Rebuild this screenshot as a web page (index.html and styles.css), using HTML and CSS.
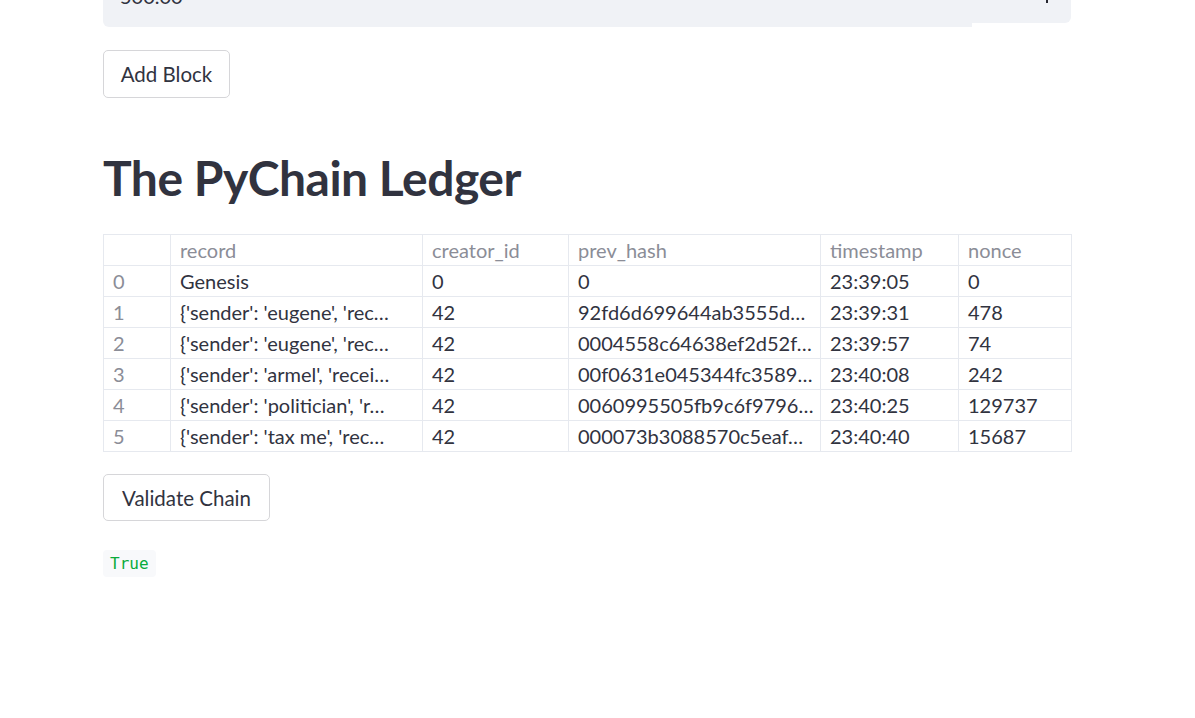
FILE: index.html
```html
<!DOCTYPE html>
<html>
<head>
<meta charset="utf-8">
<link rel="stylesheet" href="styles.css">
</head>
<body>
<main class="page">
  <div class="num-input">
    <div class="num-field"><span class="num-value">500.00</span></div>
    <div class="num-steps">
      <span class="step-plus"></span>
    </div>
  </div>

  <button class="btn btn-add">Add Block</button>

  <h1 class="title">The PyChain Ledger</h1>

  <table class="ledger">
    <colgroup>
      <col class="c-idx">
      <col class="c-rec">
      <col class="c-cre">
      <col class="c-hash">
      <col class="c-ts">
      <col class="c-nonce">
    </colgroup>
    <thead>
      <tr>
        <th></th>
        <th>record</th>
        <th>creator_id</th>
        <th>prev_hash</th>
        <th>timestamp</th>
        <th>nonce</th>
      </tr>
    </thead>
    <tbody>
      <tr><td class="idx">0</td><td>Genesis</td><td>0</td><td>0</td><td>23:39:05</td><td>0</td></tr>
      <tr><td class="idx">1</td><td>{'sender': 'eugene', 'rec…</td><td>42</td><td>92fd6d699644ab3555d…</td><td>23:39:31</td><td>478</td></tr>
      <tr><td class="idx">2</td><td>{'sender': 'eugene', 'rec…</td><td>42</td><td>0004558c64638ef2d52f…</td><td>23:39:57</td><td>74</td></tr>
      <tr><td class="idx">3</td><td>{'sender': 'armel', 'recei…</td><td>42</td><td>00f0631e045344fc3589…</td><td>23:40:08</td><td>242</td></tr>
      <tr><td class="idx">4</td><td>{'sender': 'politician', 'r…</td><td>42</td><td>0060995505fb9c6f9796…</td><td>23:40:25</td><td>129737</td></tr>
      <tr><td class="idx">5</td><td>{'sender': 'tax me', 'rec…</td><td>42</td><td>000073b3088570c5eaf…</td><td>23:40:40</td><td>15687</td></tr>
    </tbody>
  </table>

  <button class="btn btn-validate">Validate Chain</button>

  <div class="result"><code class="result-code">True</code></div>
</main>
</body>
</html>
```

FILE: styles.css
```css
html, body {
  margin: 0;
  padding: 0;
  background: #ffffff;
}

body {
  font-family: "Lato", "Noto Sans", sans-serif;
  color: #31333f;
  overflow: hidden;
  height: 718px;
}

.page {
  width: 968px;
  margin-left: 103px;
  display: flex;
  flex-direction: column;
  align-items: flex-start;
}

.num-input {
  width: 968px;
  display: flex;
  align-items: flex-start;
  margin-top: -21px;
}

.num-field {
  flex: 1;
  height: 48px;
  background: #f0f2f6;
  border-bottom-left-radius: 6px;
  padding: 5px 0 0 17px;
  box-sizing: border-box;
}

.num-value {
  display: block;
  font-size: 20px;
  line-height: 24px;
  color: #31333f;
}

.num-steps {
  width: 99px;
  height: 44px;
  background: #f0f2f6;
  border-bottom-right-radius: 6px;
  position: relative;
}

.step-plus {
  position: absolute;
  left: 74px;
  top: 11px;
  width: 2px;
  height: 13px;
  background: #262730;
}

.btn {
  font-family: inherit;
  font-size: 20.5px;
  color: #31333f;
  background: #ffffff;
  border: 1px solid #d6d6d9;
  border-radius: 5px;
  padding: 0;
  height: 48px;
  line-height: 46px;
  cursor: pointer;
}

.btn-add {
  margin-top: 23px;
  width: 127px;
}

.btn-validate {
  margin-top: 22px;
  width: 167px;
  height: 47px;
}

.title {
  font-size: 48px;
  font-weight: 700;
  color: #31333f;
  margin: 50px 0 0 0;
  line-height: 60px;
  letter-spacing: -0.5px;
}

.ledger {
  margin-top: 26px;
  border-collapse: collapse;
  table-layout: fixed;
  width: 968px;
  font-size: 20px;
}

.c-idx { width: 67px; }
.c-rec { width: 252px; }
.c-cre { width: 146px; }
.c-hash { width: 252px; }
.c-ts { width: 138px; }
.c-nonce { width: 113px; }

.ledger tr {
  height: 31px;
}

.ledger th,
.ledger td {
  border: 1px solid #e6e9ef;
  padding: 0 2px 0 9px;
  text-align: left;
  white-space: nowrap;
  overflow: hidden;
  font-weight: 400;
  color: #31333f;
}

.ledger th {
  color: #8b8d97;
}

.ledger td.idx {
  color: #8b8d97;
}

.result {
  margin-top: 29px;
  display: flex;
}

.result-code {
  font-family: "DejaVu Sans Mono", "Liberation Mono", monospace;
  font-size: 16px;
  color: #09ab3b;
  background: #f8f9fb;
  border-radius: 4px;
  padding: 0 7px;
  height: 27px;
  line-height: 27px;
}
```
